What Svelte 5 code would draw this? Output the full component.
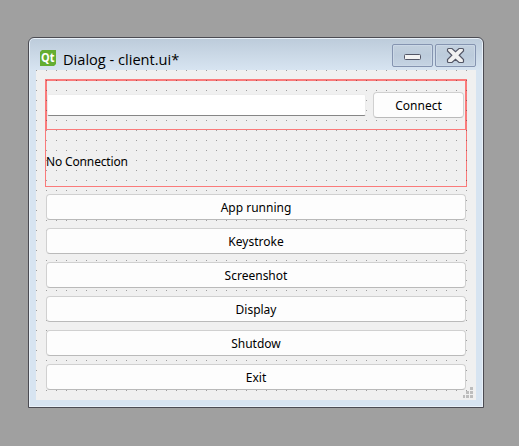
<script>
  const actions = ['App running', 'Keystroke', 'Screenshot', 'Display', 'Shutdow', 'Exit'];
</script>

<main>
  <section class="window">
    <header>
      <svg class="logo" width="16" height="16" viewBox="0 0 16 16">
        <path d="M2 0H16V14L14 16H0V2Z" fill="#64ad32" />
        <text x="1" y="11.8" textLength="13.4" lengthAdjust="spacingAndGlyphs">Qt</text>
      </svg>
      <h1>Dialog - client.ui*</h1>
      <div class="controls">
        <span class="control">
          <svg width="39" height="21" viewBox="0 0 39 21">
            <rect x="11.5" y="9.5" width="16" height="5" rx="1" fill="#f3f3f3" stroke="#535666" />
          </svg>
        </span>
        <span class="control">
          <svg width="39" height="21" viewBox="0 0 39 21">
            <path d="M11.5 4.5Q11.5 3.5 12.5 3.5H16L19.5 6.7L23 3.5H26.5Q27.5 3.5 27.5 4.5V6L23.2 10.3L27.5 14.5V16.5Q27.5 17.5 26.5 17.5H23L19.5 14.2L16 17.5H12.5Q11.5 17.5 11.5 16.5V14.5L15.8 10.3L11.5 6Z" fill="#f1f1f1" stroke="#535666" stroke-width="1.2" />
          </svg>
        </span>
      </div>
    </header>

    <div class="client">
      <!-- Form designer grid: one dot every ten pixels, over the layout outlines -->
      <svg class="grid" width="431" height="321" shape-rendering="crispEdges">
        <defs>
          <pattern id="dots" width="10" height="10" patternUnits="userSpaceOnUse">
            <rect width="1" height="1" fill="#000" fill-opacity="0.34" />
          </pattern>
        </defs>
        <rect width="431" height="321" fill="url(#dots)" />
      </svg>
      <div class="group">
        <div class="row">
          <input type="text" aria-label="Address" />
          <button class="connect">Connect</button>
        </div>
        <p>No Connection</p>
      </div>
      <div class="actions">
        {#each actions as action}
          <button>{action}</button>
        {/each}
      </div>
      <svg class="grip" width="10" height="11" viewBox="0 0 10 11" fill="#bdbdbd">
        <path d="M7 0h3v3h-3zM3 4h3v3h-3zM7 4h3v3h-3zM0 8h2v3h-2zM3 8h3v3h-3zM7 8h3v3h-3z" />
      </svg>
    </div>
  </section>
</main>

<style>
  :global(body) {
    background: #a0a0a0;
  }

  main {
    box-sizing: border-box;
    width: 519px;
    height: 446px;
    padding: 37px 0 0 28px;
    background: #a0a0a0;
    color: #000;
    font-family: 'Noto Sans', sans-serif;
    font-size: 12px;
    overflow: hidden;
  }

  .window {
    box-sizing: border-box;
    width: 456px;
    height: 371px;
    padding: 0 7px;
    border: 1px solid #4b4b52;
    border-radius: 6px 6px 0 0;
    background: linear-gradient(#bccbda, #d7e4f1 32px, #d7e4f1);
    box-shadow: inset 0 0 0 1px #e9f1f9;
  }

  header {
    display: flex;
    height: 32px;
  }

  .logo {
    margin: 12px 0 0 4px;
  }

  .logo text {
    font: bold 12px 'Open Sans', sans-serif;
    fill: #fff;
  }

  h1 {
    flex: 1;
    margin: 11px 0 0 7px;
    font: 400 14.6px/20px 'Open Sans', sans-serif;
    white-space: nowrap;
  }

  .controls {
    display: flex;
    gap: 2px;
    margin-top: 6px;
  }

  .control {
    box-sizing: border-box;
    width: 41px;
    height: 23px;
    border: 1px solid #8594b0;
    border-radius: 2px;
    background: linear-gradient(#c3d0de, #bccbdb 48%, #c6d4e3);
    box-shadow: inset 0 0 0 1px #cbd8e6;
  }

  .control svg {
    display: block;
  }

  .client {
    position: relative;
    box-sizing: border-box;
    width: 440px;
    height: 330px;
    padding: 9px 0 0 9px;
    background: #f0f0f0;
  }

  .grid {
    position: absolute;
    left: 0;
    top: 0;
    pointer-events: none;
  }

  .group {
    box-sizing: border-box;
    width: 422px;
    height: 108px;
    border: 1px solid #fa7a7a;
  }

  .row {
    display: flex;
    align-items: center;
    gap: 7px;
    box-sizing: border-box;
    height: 50px;
    padding: 0 1px 0 0;
    border: 1px solid #fa7a7a;
  }

  input,
  button,
  p {
    position: relative;
  }

  input {
    box-sizing: border-box;
    flex: 1;
    min-width: 0;
    height: 22px;
    margin: 0;
    padding: 0 4px;
    border: 1px solid #ececec;
    border-bottom-color: #868686;
    border-radius: 2px;
    background: #fff;
    font: inherit;
    outline: none;
  }

  button {
    box-sizing: border-box;
    display: block;
    width: 420px;
    height: 26px;
    margin: 0;
    padding: 2px 0 0;
    border: 1px solid #d0d0d0;
    border-bottom-color: #bababa;
    border-radius: 4px;
    background: #fdfdfd;
    color: #000;
    font: inherit;
    line-height: 22px;
  }

  .connect {
    width: 91px;
  }

  p {
    margin: 23px 0 0;
    line-height: 17px;
    letter-spacing: -0.15px;
  }

  .actions {
    display: flex;
    flex-direction: column;
    gap: 8px;
    margin: 7px 0 0 1px;
  }

  .grip {
    position: absolute;
    right: 3px;
    bottom: 2px;
  }
</style>
